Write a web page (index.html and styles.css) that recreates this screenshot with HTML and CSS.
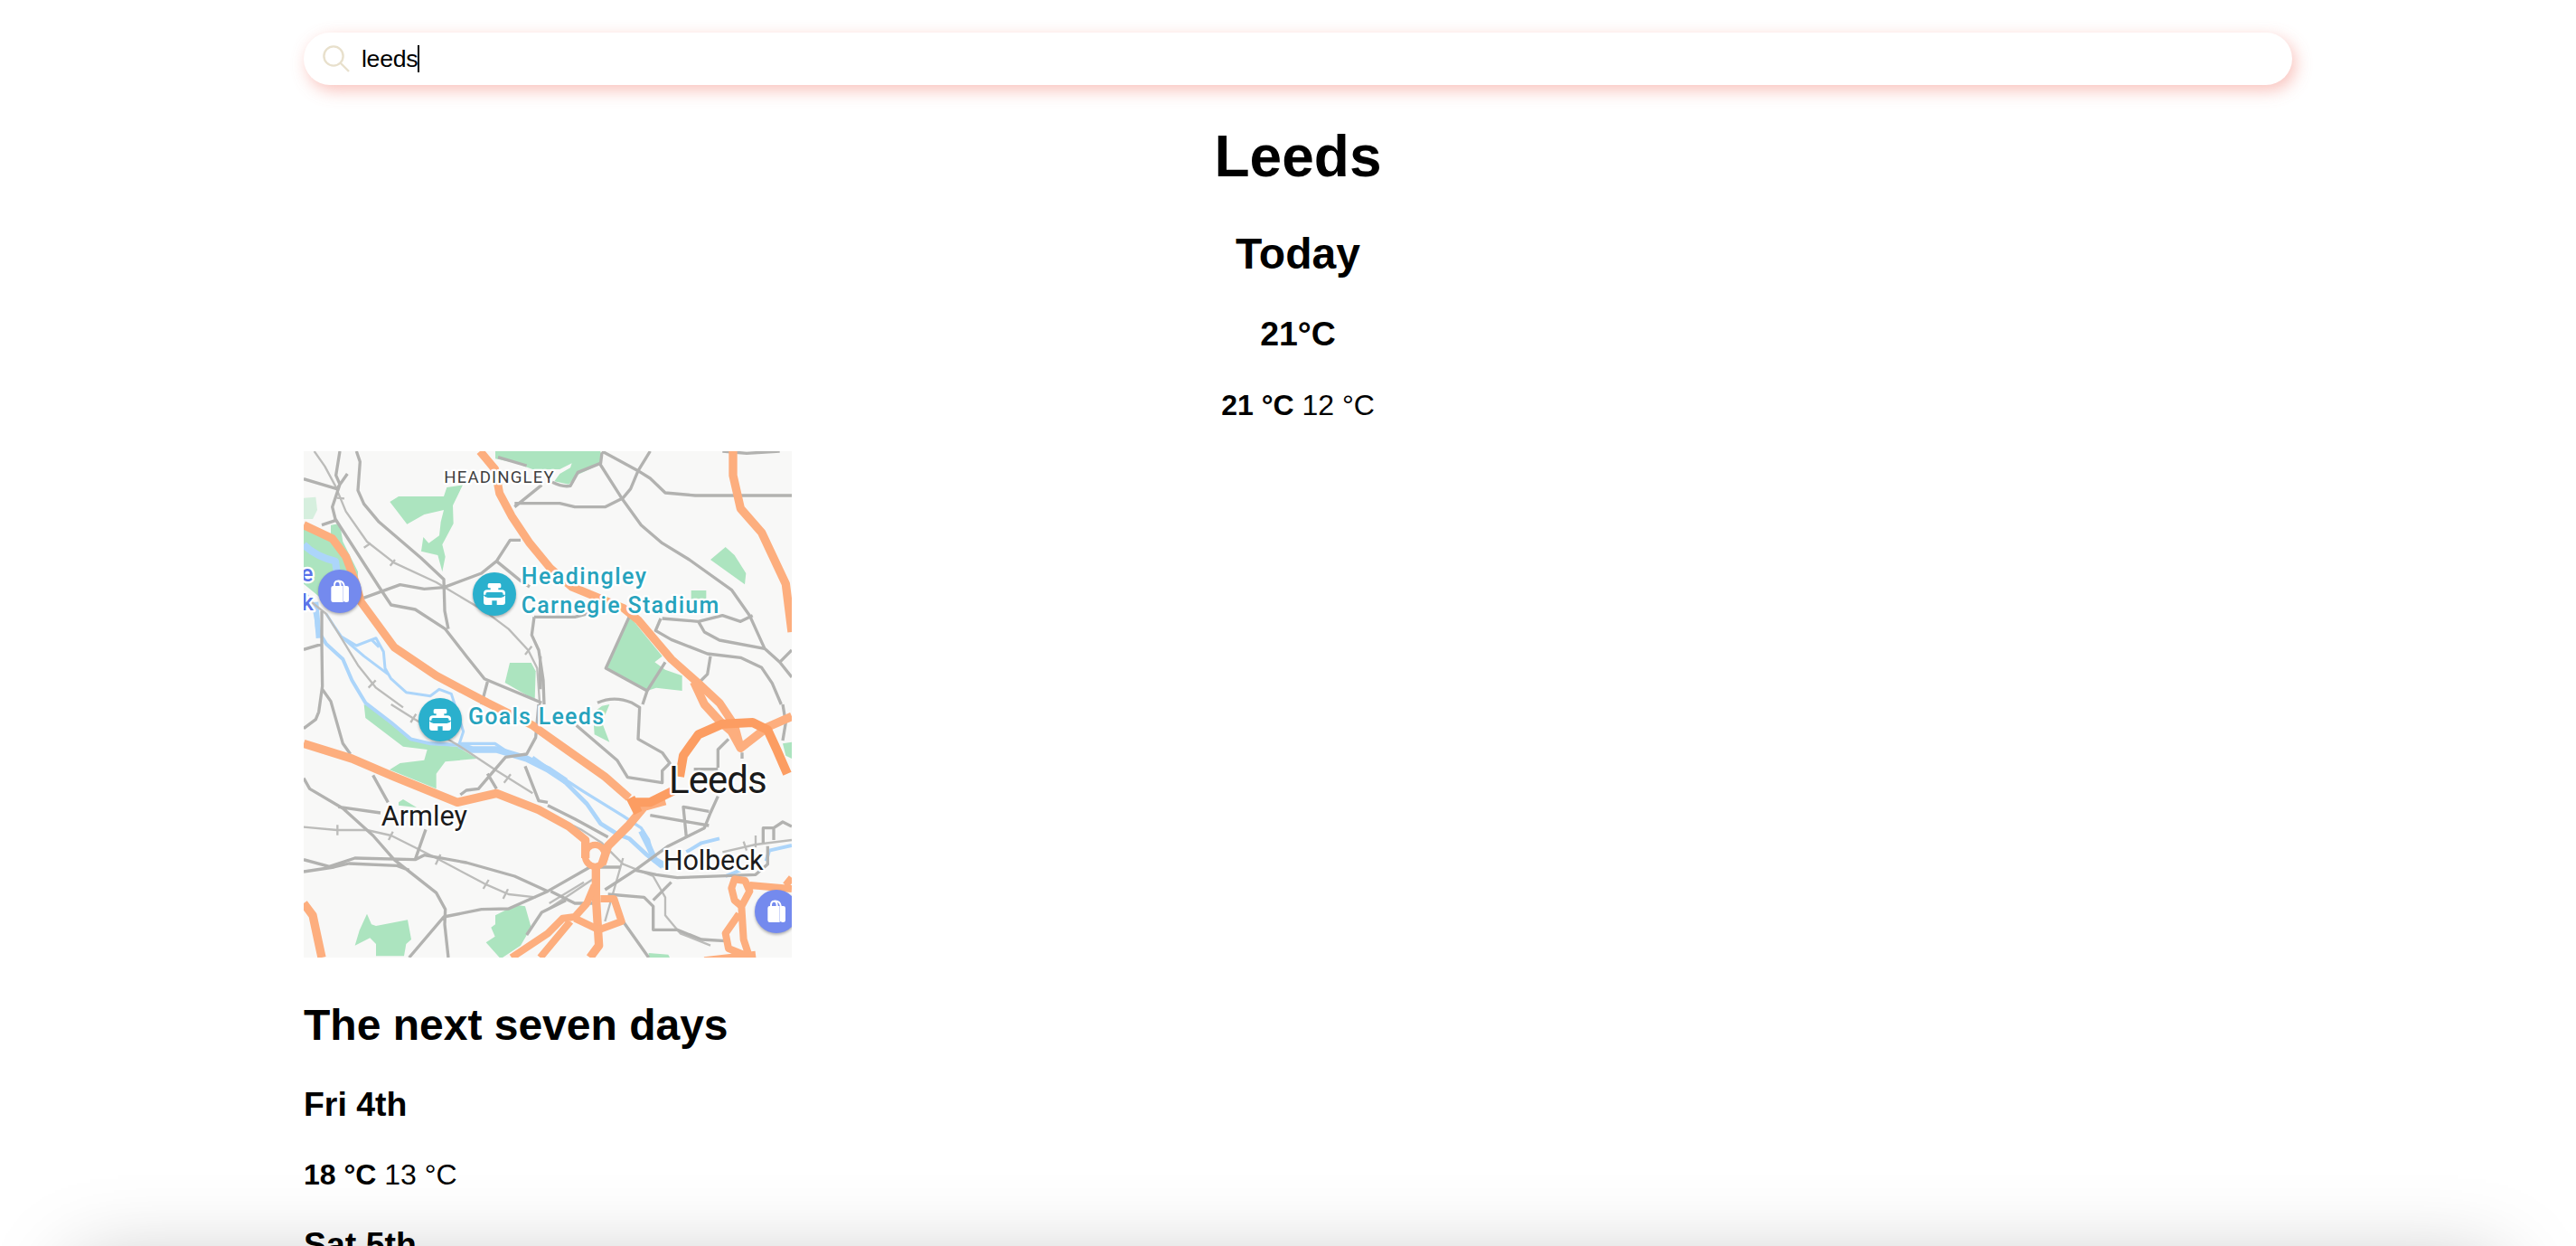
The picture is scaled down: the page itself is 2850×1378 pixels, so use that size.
FILE: index.html
```html
<!DOCTYPE html>
<html lang="en">
<head>
<meta charset="utf-8">
<title>Leeds weather</title>
<link rel="stylesheet" href="styles.css">
</head>
<body>
<main class="page">
  <div class="search">
    <svg class="search-icon" viewBox="0 0 32 32"><circle cx="13" cy="13" r="10.6"/><path d="M20.5 20.5 30 30"/></svg>
    <span class="search-text">leeds</span><span class="caret"></span>
  </div>
  <section class="today">
    <h1>Leeds</h1>
    <h2>Today</h2>
    <h3>21°C</h3>
    <p><strong>21 °C</strong> 12 °C</p>
  </section>
  <svg class="map" viewBox="0 0 1620 1680">
    <defs>
      <g id="stadium">
        <circle r="72" fill="#2ab0cd"/>
        <path fill="#fff" d="M-17-36h34q5 0 5 5v7q0 4-4 4h-5v6h11q12 0 12 12v4h-72v-4q0-12 12-12h11v-6h-5q-4 0-4-4v-7q0-5 5-5Z"/>
        <rect x="-29" y="-6" width="58" height="12" rx="6" fill="#2ab0cd"/>
        <path fill="#fff" d="M-36 4q5 8 14 8h44q9 0 14-8v23q0 9-9 9H8V22H-8v14h-19q-9 0-9-9Z"/>
      </g>
      <g id="shop">
        <circle r="72" fill="#748aee"/>
        <path fill="#fff" d="M-29-11q0-7 7-7h33v54h-33q-7 0-7-7ZM16-18h7q7 0 7 7v40q0 7-7 7h-5l-2-2Z"/>
        <path fill="none" stroke="#fff" stroke-width="6" d="M-18-16v-4q0-14 10-14t10 14v4M-7-34q19-2 22 18v50"/>
      </g>
    </defs>
    <rect width="1620" height="1680" fill="#f8f8f7"/>
    <g class="green">
      <path d="M636 0H985L990 35 960 55 905 80 880 110 832 100 850 75 885 55 890 40 850 60 760 60 700 38 636 25Z"/>
      <path d="M286 168 315 150H465L475 120 528 112 495 180 497 240 460 310 470 350 460 400 445 345 390 332 397 285 415 305 450 280 455 235 465 195 400 210 343 242Z"/>
      <path d="M0 155 40 152 45 195 30 225H0Z" opacity=".45"/>
      <path d="M0 255 90 290 90 245 120 240 130 300 180 400V480L60 490 0 440Z"/>
      <path d="M684 702H755L770 730 767 825 668 768Z"/>
      <path d="M1350 360 1400 318 1430 345 1468 405 1464 442Z"/><path d="M1286 462h50v28h-50Z"/>
      <path d="M1080 545 1190 680 1165 700 1200 725 1256 745V795L1170 785 1140 795 1003 720Z"/>
      <path d="M960 868 990 845 1015 840 990 900 1015 965 965 940Z"/>
      <path d="M200 840 215 845 350 955 440 975 510 980 575 1020 470 1030 440 1070V1120L285 1057 320 1035 400 1025 410 990 330 980 205 885Z"/>
      <path d="M315 1165 330 1155 375 1182 315 1175Z"/>
      <path d="M170 1640 185 1590 210 1535 225 1570 240 1575 345 1555 357 1620 340 1635 333 1675H240V1635L220 1615Z"/>
      <path d="M636 1540 705 1505 735 1510 755 1580 720 1640 660 1680H650L605 1630 635 1610 622 1580 636 1570Z"/>
      <path d="M1590 970 1620 965V1020L1600 1010ZM1145 1665 1210 1670 1215 1680H1145Z"/>
    </g>
    <g class="river">
      <path stroke-width="24" d="M0 310Q40 350 105 365L110 400"/>
      <path stroke-width="18" d="M40 500 50 620"/>
      <path stroke-width="12" d="M0 470Q40 500 45 590L75 640 130 690 160 760 205 835 290 900 355 955 420 970 520 975"/>
      <path stroke-width="9" d="M75 540Q100 580 125 615L175 645 240 620 265 665 270 720 290 755 340 800 420 812 450 790 490 805 530 930 515 975M130 620 200 680 280 740M225 625 250 650"/>
      <path stroke-width="22" d="M515 975 560 990 640 990 740 1020 810 1055 870 1095"/>
      <path stroke-width="14" d="M850 1080 890 1120 940 1170 985 1235 1040 1270 1080 1285 1140 1340 1190 1380"/>
      <path stroke-width="10" d="M520 970H635L680 1000M760 1015 830 1065 930 1130 1060 1210 1120 1250 1145 1290 1160 1350 1195 1375"/>
      <path stroke-width="20" d="M1120 1260 1145 1310 1165 1355 1200 1375"/>
      <path stroke-width="12" d="M1270 1330 1320 1300 1380 1285M1535 1360 1545 1325 1620 1308M1400 1410 1450 1390"/>
    </g>
    <g class="rail">
      <path d="M35 0 70 50 105 115 140 200 210 300 300 370 440 435 465 450 600 530 680 590 745 660 775 720 785 860M0 480 75 540 125 620 180 710 240 785 330 850M290 840 370 890 520 980 640 1060 760 1135M0 1247 110 1257H210L290 1275 440 1350 600 1435 680 1470 770 1480M810 1200 920 1255 990 1300 1060 1370 1160 1410 1200 1480 1200 1540 1250 1600 1350 1640M1000 1560 1060 1350M810 1520 960 1420M815 1500 930 1430M1390 1330 1500 1305 1620 1290"/>
      <path d="m110 155 25 2M200 320l22-15M287 380l16-20M735 675l22-28M215 785l24-25M355 900l18-28M665 1100l22-28M112 1240v34M282 1290l14-28M438 1372l16-34M596 1452l18-30M662 1485l16-32M1470 1325l-10-30M1500 1315v-40"/>
    </g>
    <g class="road">
      <path d="M0 92 110 125 145 75M120 0 107 80 120 110 95 185 105 225 250 450 290 510 370 525 470 590 540 680 600 755 790 835"/>
      <path d="M175 0 187 35 180 130 200 175 250 235 390 355 465 425 468 530 480 590M105 230 60 245M190 490 320 443 400 457 465 452 590 405 640 365 685 295H720M640 365 720 430 750 450M610 765 590 840"/>
      <path d="M645 20 740 48M790 112 700 185M700 173H850L900 185H1000L1060 155 1085 125 1110 65 1150 0M990 0 1110 65 1150 90 1200 138 1300 147H1620M990 5 985 45 1055 155 1120 245 1190 305 1280 360 1420 460 1480 545 1530 655 1580 700 1620 750"/>
      <path d="M1390 0 1470 7 1580 0M825 103Q860 120 885 115L910 70 985 40M765 550H900L980 530M765 550 757 610 780 660 795 760 798 840M785 680V790"/>
      <path d="M1190 555 1310 565 1390 545 1450 565 1490 545M1185 555 1168 595 1220 625 1340 672 1450 685 1520 718 1555 770 1585 840M1310 565 1330 600 1380 627 1530 655M1350 680 1340 740 1315 765M1580 700 1620 660M1080 550 1003 720 1140 795 1200 700M1140 795 1125 840M975 835Q1030 810 1090 835L1115 850 1110 955 1190 1000 1215 1035 1190 1060 1190 1100 1075 1082 1040 1025 905 910"/>
      <path d="M60 530V640L0 658M60 640 62 780 50 865 40 890 0 920M62 790 90 830 130 970 155 1005M230 1075 280 1165M0 1085 20 1120 130 1185 230 1275 300 1355 440 1465 470 1520 468 1570 480 1680M115 1180 255 1200M0 1355 85 1378 170 1350 370 1355 405 1255M0 1395 100 1380 150 1368 310 1375 350 1390M370 1355 400 1340 540 1365 700 1410 810 1460M350 1680 465 1545 590 1520 680 1518 810 1460 950 1380 1050 1380M520 1140 540 1125 580 1120 670 1015 740 1005 770 950 780 840M610 1070 640 1120M735 1045 780 1160 810 1165"/>
      <path d="M810 1175 900 1220 1010 1280M1000 1455 1100 1390 1210 1310 1330 1250 1350 1200 1375 1145M1150 1208 1345 1242M1270 1280 1260 1180 1345 1195M1010 1470 1130 1480 1160 1510V1588H1240L1320 1620 1400 1625M1100 1390 1170 1405 1240 1415 1500 1405 1540 1370 1540 1310M1160 1490 1220 1430M1060 1560 1145 1680M820 1460 900 1500 970 1500M1375 1050V990L1410 955M1295 1055H1375M1455 1020V1000M1525 1300V1250H1560V1290M1560 1250 1590 1230 1620 1245M1590 840 1600 900 1590 960M740 1605 790 1530 870 1490"/>
    </g>
    <g class="highway">
      <path stroke-width="27" d="M0 245 95 290 140 350 170 430 190 500 300 650 440 745 610 835 760 910 830 960 1000 1080 1080 1150"/>
      <path stroke-width="27" d="M585 0 635 60 650 140 690 215 750 305 820 390 890 450 1060 520 1110 560 1220 690 1310 770 1380 835 1430 910 1450 985"/>
      <path stroke-width="28" d="M1425 0 1425 80 1450 190 1520 270 1600 440 1620 600M1295 765 1330 840 1385 900 1420 930 1450 985 1540 915 1620 880"/>
      <path stroke-width="28" d="M0 970 160 1020 300 1080 510 1165 640 1135 780 1190 880 1245 935 1290 935 1350M0 1500 30 1540 60 1680"/>
      <path stroke-width="28" d="M1200 1160 1130 1180 1080 1240 1010 1310 990 1370M970 1370V1480L980 1640 950 1680"/>
      <ellipse cx="967" cy="1342" rx="33" ry="36" stroke-width="22"/>
      <path stroke-width="24" d="M965 1440 940 1500 900 1545 860 1550 810 1600 690 1680M900 1550 980 1588 1055 1560 1030 1485 985 1485M885 1560 785 1680"/>
      <path stroke-width="24" d="M1430 1420 1420 1450 1430 1490 1453 1510 1480 1460 1465 1425ZM1480 1440 1620 1452M1600 1440 1620 1415M1453 1510 1460 1620 1480 1680M1445 1535 1400 1600 1410 1650 1460 1670M1330 1690 1500 1670"/>
    </g>
    <g class="ring">
      <path stroke-width="30" d="M1248 1080 1260 1010 1310 940 1390 905 1490 900 1540 925 1570 990 1605 1070M1085 1165 1150 1165 1230 1125M1085 1150 1110 1200"/>
    </g>
    <g class="label">
      <text class="area" x="466" y="104" textLength="364">HEADINGLEY</text>
      <text class="poi" x="722" y="440" textLength="415">Headingley</text>
      <text class="poi" x="722" y="537" textLength="656">Carnegie Stadium</text>
      <text class="poi" x="546" y="907" textLength="450">Goals Leeds</text>
      <text class="poi mall" x="31" y="432" text-anchor="end">e</text>
      <text class="poi mall" x="32" y="527" text-anchor="end">k</text>
      <text class="town" x="257" y="1243" textLength="286">Armley</text>
      <text class="town" x="1193" y="1390" textLength="333">Holbeck</text>
      <text class="city" x="1212" y="1135" textLength="326">Leeds</text>
    </g>
    <g class="pins">
      <use href="#shop" x="120" y="465"/>
      <use href="#stadium" x="633" y="474"/>
      <use href="#stadium" x="453" y="891"/>
      <use href="#shop" x="1569" y="1527"/>
    </g>
  </svg>
  <section class="forecast">
    <h2>The next seven days</h2>
    <h3>Fri 4th</h3>
    <p><strong>18 °C</strong> 13 °C</p>
    <h3>Sat 5th</h3>
  </section>
</main>
<div class="bottom-shade"></div>
</body>
</html>
```
FILE: styles.css
```css
html { height: 100%; overflow: hidden; background: #fff; }
body {
  margin: 0;
  height: 100%;
  overflow: hidden;
  color: #000;
  font: 32px "Liberation Sans", Arial, sans-serif;
}
.page { width: 2200px; margin-left: 336px; padding-top: 36px; }
.search {
  display: flex;
  align-items: center;
  height: 58px;
  box-sizing: border-box;
  padding-left: 20px;
  border-radius: 29px;
  background: #fff;
  box-shadow: 4px 6px 18px rgba(240, 110, 95, .42);
  font-size: 26.667px;
}
.search-icon { width: 32px; height: 32px; fill: none; stroke: #e8e0cc; stroke-width: 2.4; }
.search-text { margin-left: 12px; letter-spacing: -.3px; }
.caret { width: 2px; height: 30px; background: #000; }
.today { padding-top: 1px; text-align: center; }
h1, h2, h3, p { line-height: normal; }
h1 { margin: 41px 0 43px; font-size: 64px; }
h2 { margin: 39.84px 0; font-size: 48px; }
h3 { margin: 37.44px 0; font-size: 37.44px; }
.today h3 { margin-bottom: 39px; }
p { margin: 32px 0; }
.map { display: block; width: 540px; height: 560px; overflow: hidden; }
.forecast { padding-top: 7px; }
.green { fill: #ace4bf; }
.river, .rail, .road, .highway, .ring { fill: none; stroke-linejoin: round; }
.river { stroke: #acd5fa; }
.rail { stroke: #bcbcba; stroke-width: 7; }
.road { stroke: #b2b2b0; stroke-width: 10; }
.highway { stroke: #fdae7e; }
.ring { stroke: #fc9d62; }
.label { font-family: Roboto, sans-serif; paint-order: stroke; stroke: #fff; stroke-width: 14px; stroke-linejoin: round; }
.area { font-size: 56px; fill: #3f3f3f; }
.poi { font-size: 75px; font-weight: 500; fill: #27a3bd; }
.mall { fill: #5b72e8; }
.town { font-size: 92px; fill: #1b1b1b; }
.city { font-size: 126px; fill: #1b1b1b; }
.pins { filter: drop-shadow(0 5px 5px rgba(0, 0, 0, .3)); }
.bottom-shade {
  position: fixed;
  top: 1402px;
  left: 85px;
  right: 85px;
  height: 400px;
  box-shadow: 0 0 90px rgba(0, 0, 0, .27);
  pointer-events: none;
}
```
